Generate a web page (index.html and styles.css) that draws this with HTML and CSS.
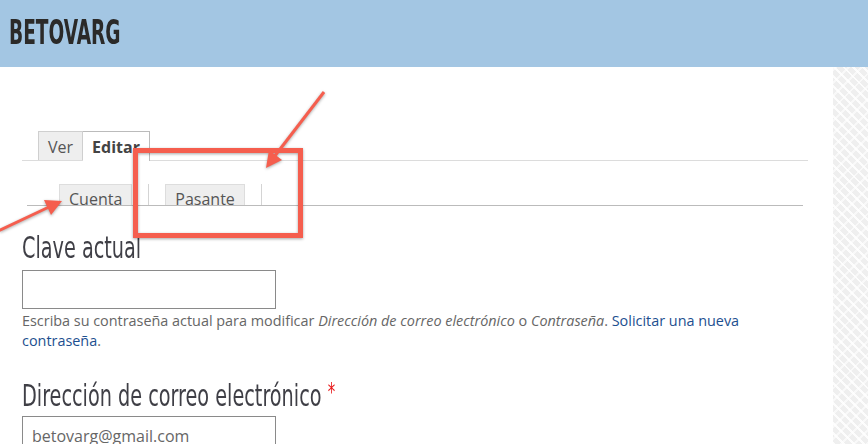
FILE: index.html
```html
<!DOCTYPE html>
<html lang="es">
<head>
<meta charset="utf-8">
<title>Betovarg</title>
<link rel="stylesheet" href="styles.css">
</head>
<body>
<header class="site-header">
  <span class="site-name">BETOVARG</span>
</header>
<div class="page">
  <main class="content">
    <div class="tabs-primary">
      <span class="tab-p">Ver</span>
      <span class="tab-p active">Editar</span>
    </div>
    <ul class="tabs-secondary">
      <li><span class="tab-s">Cuenta</span></li>
      <li><span class="tab-s">Pasante</span></li>
    </ul>
    <div class="field">
      <label class="field-label"><span class="label-text">Clave actual</span></label>
      <div class="input"></div>
      <p class="description">Escriba su contraseña actual para modificar <em>Dirección de correo electrónico</em> o <em>Contraseña</em>. <a href="#">Solicitar una nueva contraseña</a>.</p>
    </div>
    <div class="field">
      <label class="field-label"><span class="label-text">Dirección de correo electrónico <span class="req">*</span></span></label>
      <div class="input">betovarg@gmail.com</div>
    </div>
  </main>
  <aside class="sidebar"></aside>
</div>
<svg class="annotations" width="868" height="444" viewBox="0 0 868 444">
  <g fill="none" stroke="#f55e4e">
    <rect x="135.5" y="150.5" width="165" height="85" stroke-width="5"/>
    <line x1="324" y1="92" x2="274" y2="157" stroke-width="3"/>
    <line x1="-2" y1="231" x2="49" y2="207" stroke-width="3"/>
  </g>
  <g fill="#f55e4e">
    <polygon points="266,168 282,160 269,150"/>
    <polygon points="62,201 51,215 44,200"/>
  </g>
</svg>
</body>
</html>
```
FILE: styles.css
```css
html, body {
  margin: 0;
  padding: 0;
  background: #fff;
  font-family: "Open Sans", "DejaVu Sans", sans-serif;
  overflow: hidden;
}

.site-header {
  height: 67px;
  background: #a3c6e3;
  box-sizing: border-box;
  padding: 13px 0 0 9px;
}

.site-name {
  display: inline-block;
  font-family: "DejaVu Sans", sans-serif;
  font-stretch: condensed;
  font-weight: bold;
  font-size: 33px;
  line-height: 40px;
  color: #2b2a29;
  transform: scaleX(0.625);
  transform-origin: left center;
}

.page {
  display: flex;
  height: 377px;
}

.content {
  width: 833px;
  box-sizing: border-box;
  padding: 64px 0 0 22px;
}

.sidebar {
  flex: 1;
  background-color: #efefef;
  background-image:
    repeating-linear-gradient(45deg, rgba(255,255,255,0.85) 0 2px, transparent 2px 7px),
    repeating-linear-gradient(-45deg, rgba(255,255,255,0.6) 0 2px, transparent 2px 9px);
}

.tabs-primary {
  width: 770px;
  height: 29px;
  border-bottom: 1px solid #dcdcdc;
  padding-left: 16px;
  display: flex;
  align-items: flex-end;
}

.tab-p {
  height: 29px;
  box-sizing: border-box;
  padding: 3px 9px 0 9px;
  border: 1px solid #cfcfcf;
  border-bottom: none;
  background: #eeeeee;
  color: #555;
  font-size: 16px;
  line-height: 24px;
}

.tab-p.active {
  background: #fff;
  font-weight: bold;
  color: #444;
  border-color: #bbbbbb;
  border-left: none;
  margin-bottom: -1px;
  height: 30px;
}

.tabs-secondary {
  list-style: none;
  margin: 23px 0 0 5px;
  padding: 0 0 0 16px;
  width: 760px;
  height: 21px;
  border-bottom: 1px solid #bbbbbb;
  display: flex;
}

.tabs-secondary li {
  padding: 0 16px;
  border-right: 1px solid #d4d4d4;
  height: 21px;
}

.tab-s {
  display: block;
  height: 21px;
  box-sizing: border-box;
  overflow: hidden;
  padding: 4px 9px 0 9px;
  border: 1px solid #dddddd;
  border-bottom: none;
  background: #eeeeee;
  color: #555;
  font-size: 16px;
  line-height: 21px;
}

.field-label {
  display: block;
  margin-top: 23px;
  height: 36px;
}

.label-text {
  display: inline-block;
  font-family: "DejaVu Sans", sans-serif;
  font-stretch: condensed;
  font-size: 31px;
  line-height: 36px;
  color: #3f3f46;
  transform: scaleX(0.69);
  transform-origin: left center;
  white-space: nowrap;
}

.req {
  color: #e8191a;
  font-size: 24px;
  vertical-align: 6px;
}

.input {
  margin-top: 5px;
  width: 254px;
  height: 39px;
  box-sizing: border-box;
  border: 1px solid #8a8a8a;
  padding: 0 9px;
  font-size: 16px;
  line-height: 38px;
  color: #666;
}

.description {
  margin: 2px 0 0 0;
  width: 735px;
  font-size: 14.4px;
  line-height: 20px;
  color: #666;
}

.description em {
  font-style: italic;
}

.description a {
  color: #1d4f8f;
  text-decoration: none;
}

.field + .field .input {
  margin-top: 6px;
}

.annotations {
  position: absolute;
  left: 0;
  top: 0;
  pointer-events: none;
  filter: drop-shadow(0 1px 1.5px rgba(0,0,0,0.35));
}
```
